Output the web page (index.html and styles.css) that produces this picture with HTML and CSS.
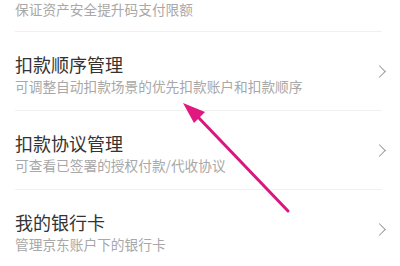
FILE: index.html
```html
<!DOCTYPE html>
<html lang="zh-CN">
<head>
    <meta charset="UTF-8">
    <title>支付设置</title>
    <link rel="stylesheet" href="styles.css">
</head>
<body>
    <div class="list">
        <div class="item top">
            <div class="sub">保证资产安全提升码支付限额</div>
        </div>
        <div class="item">
            <div class="text">
                <div class="title">扣款顺序管理</div>
                <div class="sub">可调整自动扣款场景的优先扣款账户和扣款顺序</div>
            </div>
            <span class="chev"></span>
        </div>
        <div class="item">
            <div class="text">
                <div class="title">扣款协议管理</div>
                <div class="sub">可查看已签署的授权付款/代收协议</div>
            </div>
            <span class="chev"></span>
        </div>
        <div class="item last">
            <div class="text">
                <div class="title">我的银行卡</div>
                <div class="sub">管理京东账户下的银行卡</div>
            </div>
            <span class="chev"></span>
        </div>
    </div>
    <!-- 标注箭头 -->
    <svg class="arrow" width="400" height="266" viewBox="0 0 400 266">
        <line x1="198" y1="117" x2="288" y2="211" stroke="#d9177c" stroke-width="3" stroke-linecap="round"/>
        <polygon points="183,103 205,112 194,123" fill="#e0187f"/>
    </svg>
</body>
</html>
```

FILE: styles.css
```css
body{
    margin: 0;
    background: #ffffff;
    font-family: "Noto Sans CJK SC", "Noto Sans", sans-serif;
    overflow: hidden;
}
.item{
    display: flex;
    align-items: center;
    height: 78px;
    padding: 0 14px 0 15px;
    position: relative;
}
.item::after{
    content: "";
    position: absolute;
    left: 15px;
    right: 18px;
    bottom: -1px;
    height: 1px;
    background: #f0f0f0;
}
.item.top{
    height: 31px;
    align-items: flex-start;
}
.item.top .sub{
    margin-top: 0;
    line-height: 18px;
}
.item.last::after{
    display: none;
}
.item + .item{
    margin-top: 1px;
}
.text{
    flex: 1;
    padding-top: 6px;
}
.title{
    font-size: 18px;
    line-height: 22px;
    color: #333333;
}
.sub{
    margin-top: 2px;
    font-size: 13.7px;
    line-height: 18px;
    color: #a8a8a8;
    white-space: nowrap;
}
.chev{
    width: 8px;
    height: 8px;
    border-top: 1.5px solid #9a9a9a;
    border-right: 1.5px solid #9a9a9a;
    transform: rotate(45deg);
    margin-right: 2px;
}
.arrow{
    position: absolute;
    top: 0;
    left: 0;
}
```
